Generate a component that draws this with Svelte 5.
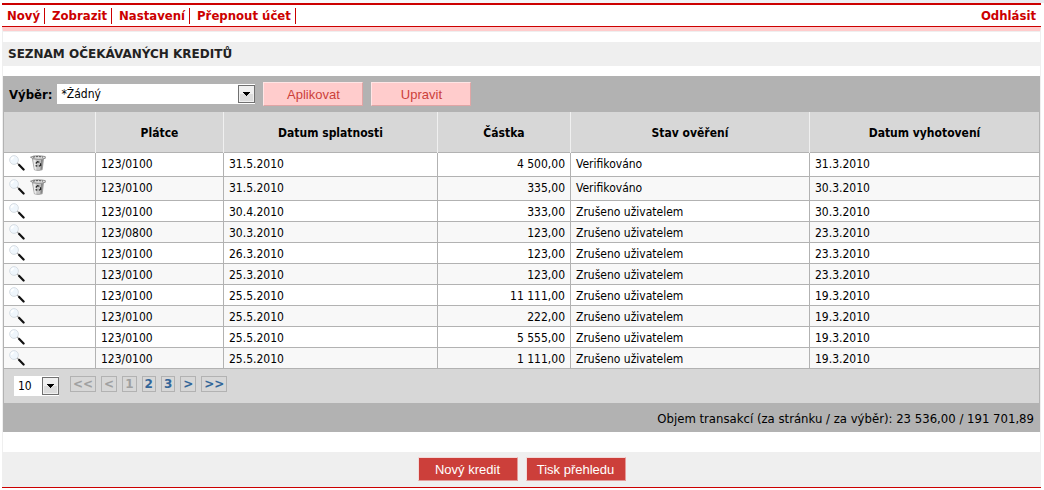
<script lang="ts">
  type Credit = {
    payer: string;
    due: string;
    amount: string;
    state: string;
    created: string;
    removable?: boolean;
  };

  const menu = ['Nový', 'Zobrazit', 'Nastavení', 'Přepnout účet'];

  const cancelled = 'Zrušeno uživatelem';

  const credits: Credit[] = [
    { payer: '123/0100', due: '31.5.2010', amount: '4 500,00', state: 'Verifikováno', created: '31.3.2010', removable: true },
    { payer: '123/0100', due: '31.5.2010', amount: '335,00', state: 'Verifikováno', created: '30.3.2010', removable: true },
    { payer: '123/0100', due: '30.4.2010', amount: '333,00', state: cancelled, created: '30.3.2010' },
    { payer: '123/0800', due: '30.3.2010', amount: '123,00', state: cancelled, created: '23.3.2010' },
    { payer: '123/0100', due: '26.3.2010', amount: '123,00', state: cancelled, created: '23.3.2010' },
    { payer: '123/0100', due: '25.3.2010', amount: '123,00', state: cancelled, created: '23.3.2010' },
    { payer: '123/0100', due: '25.5.2010', amount: '11 111,00', state: cancelled, created: '19.3.2010' },
    { payer: '123/0100', due: '25.5.2010', amount: '222,00', state: cancelled, created: '19.3.2010' },
    { payer: '123/0100', due: '25.5.2010', amount: '5 555,00', state: cancelled, created: '19.3.2010' },
    { payer: '123/0100', due: '25.5.2010', amount: '1 111,00', state: cancelled, created: '19.3.2010' }
  ];

  let filter = $state('none');
  let pageSize = $state('10');
  let page = $state(1);
  const lastPage = 3;
</script>

{#snippet arrow()}
  <svg class="arrow" width="17" height="18" viewBox="0 0 17 18" aria-hidden="true">
    <rect x="0.5" y="0.5" width="16" height="17" fill="#f0f0f0" stroke="#707070" />
    <rect x="2" y="9" width="13" height="7" fill="#dcdcdc" />
    <path d="M5 7h7v1h-1v1h-1v1H9v1H8v-1H7V9H6V8H5z" fill="#000" />
  </svg>
{/snippet}

<div class="page">
  <nav class="menu">
    <ul>
      {#each menu as item}
        <li><a href="#menu">{item}</a></li>
      {/each}
    </ul>
    <a href="#logout">Odhlásit</a>
  </nav>

  <main>
    <h1>Seznam očekávaných kreditů</h1>

    <section>
      <form class="filter" onsubmit={(e) => e.preventDefault()}>
        <label for="filter">Výběr:</label>
        <span class="select wide">
          <select id="filter" bind:value={filter}>
            <option value="none">*Žádný</option>
          </select>
          {@render arrow()}
        </span>
        <button class="button light">Aplikovat</button>
        <button class="button light" type="button">Upravit</button>
      </form>

      <table>
        <colgroup>
          <col class="c-actions" />
          <col class="c-payer" />
          <col class="c-due" />
          <col class="c-amount" />
          <col class="c-state" />
          <col class="c-created" />
        </colgroup>
        <thead>
          <tr>
            <th aria-label="Akce"></th>
            <th>Plátce</th>
            <th>Datum splatnosti</th>
            <th>Částka</th>
            <th>Stav ověření</th>
            <th>Datum vyhotovení</th>
          </tr>
        </thead>
        <tbody>
          {#each credits as credit}
            <tr>
              <td>
                <div class="actions">
                  <button class="icon" aria-label="Detail">
                    <svg width="16" height="16" viewBox="0 0 16 16">
                      <circle cx="5" cy="5" r="4.4" fill="#eff6fc" stroke="#d8dee4" />
                      <path d="M2.5 5A3 3 0 0 1 5 2.3" fill="none" stroke="#fff" stroke-width="1.4" />
                      <path d="M8.3 8.1l2 1.9" stroke="#a8a8a8" stroke-width="1.4" />
                      <path d="M10.2 10l4.4 4.5" stroke="#111" stroke-width="2.2" stroke-linecap="round" />
                    </svg>
                  </button>
                  {#if credit.removable}
                    <button class="icon tall" aria-label="Zrušit">
                      <svg width="16" height="16" viewBox="0 0 16 16">
                        <path d="M2.4 3.5h11.2l-1.4 11.3q-3.9 1.4-7.8 0z" fill="#c4c4c4" stroke="#8d8d8d" stroke-width="0.7" />
                        <path d="M3.2 4.6h2.4l.8 10.4-1.8-.4z" fill="#ececec" />
                        <path d="M11 4.8l2-.4-1.2 10-1.4.4z" fill="#858585" />
                        <path d="M.5 2.2Q3 .6 8 .8t7.3.8v1.7Q12 4.5 8 4.3 2.5 4.2.5 2.2z" fill="#dedede" stroke="#6e6e6e" stroke-width="0.7" />
                        <path d="M3 2.2q5-1.2 10 0" fill="none" stroke="#444" stroke-width="0.9" stroke-dasharray="2 1" />
                        <path d="M5.8 8.5l1.7-1.9 1.9.7M10.5 8.3l.2 2.1-1.9.8M7.3 11.2l-1.7-.5" fill="none" stroke="#222" stroke-width="1.2" />
                      </svg>
                    </button>
                  {/if}
                </div>
              </td>
              <td>{credit.payer}</td>
              <td>{credit.due}</td>
              <td class="amount">{credit.amount}</td>
              <td>{credit.state}</td>
              <td>{credit.created}</td>
            </tr>
          {/each}
        </tbody>
      </table>

      <div class="paging">
        <span class="select">
          <select aria-label="Počet záznamů na stránku" bind:value={pageSize}>
            <option>10</option>
            <option>20</option>
            <option>50</option>
          </select>
          {@render arrow()}
        </span>
        <div class="pages">
          <button disabled={page === 1} onclick={() => (page = 1)}>&lt;&lt;</button>
          <button disabled={page === 1} onclick={() => (page -= 1)}>&lt;</button>
          {#each [1, 2, 3] as n}
            <button disabled={page === n} onclick={() => (page = n)}>{n}</button>
          {/each}
          <button disabled={page === lastPage} onclick={() => (page += 1)}>&gt;</button>
          <button disabled={page === lastPage} onclick={() => (page = lastPage)}>&gt;&gt;</button>
        </div>
      </div>

      <p class="total">Objem transakcí (za stránku / za výběr): 23 536,00 / 191 701,89</p>
    </section>
  </main>

  <footer>
    <button class="button">Nový kredit</button>
    <button class="button">Tisk přehledu</button>
  </footer>
</div>

<style>
  :global(body) {
    background: linear-gradient(to right, #fff, #e9eaef) top / 100% 3px no-repeat #fff;
  }

  .page {
    margin: 3px 3px 0 2px;
    border-top: 2px solid #c00;
    border-bottom: 1px solid #c00;
    font-family: "DejaVu Sans Condensed", "DejaVu Sans", sans-serif;
    font-size: 12px;
    color: #000;
  }

  .menu {
    display: flex;
    justify-content: space-between;
    align-items: center;
    height: 21px;
    padding: 0 5px;
    border-bottom: 1px solid #c00;
    font-size: 13px;
    font-weight: bold;
  }

  .menu ul {
    display: flex;
    gap: 7px;
    margin: 0;
    padding: 0;
    list-style: none;
  }

  .menu li {
    padding-right: 4px;
    border-right: 1px solid #c00;
    line-height: 16px;
  }

  .menu a {
    color: #c00;
    text-decoration: none;
  }

  main {
    border: 1px solid #efefef;
    border-top: 4px solid #fcc;
    border-bottom: none;
    padding: 11px 0 20px;
    box-shadow: inset 0 1px #efefef;
  }

  h1 {
    margin: 0 0 10px;
    padding: 0 5px;
    background: #efefef;
    color: #222;
    font-family: "DejaVu Sans", sans-serif;
    font-size: 12px;
    line-height: 24px;
    text-transform: uppercase;
  }

  .filter {
    display: flex;
    align-items: center;
    gap: 8px;
    height: 36px;
    padding: 0 6px;
    background: #b2b2b2;
  }

  .filter label {
    margin-right: -3px;
    font-size: 13px;
    font-weight: bold;
  }

  .select {
    position: relative;
    width: 45px;
    height: 20px;
  }

  .select.wide {
    width: 198px;
  }

  .select select {
    appearance: none;
    width: 100%;
    height: 100%;
    padding: 0 20px 0 4px;
    border: none;
    border-radius: 0;
    background: #fff;
    color: #000;
    font: inherit;
  }

  .arrow {
    position: absolute;
    top: 1px;
    right: 0;
    pointer-events: none;
  }

  .button {
    width: 100px;
    height: 24px;
    padding: 0;
    border: 1px solid;
    border-color: #f3d9d9 #e59a98 #e59a98 #f3d9d9;
    background: #cc3f3a;
    color: #fff;
    font-family: "Liberation Sans", Arial, sans-serif;
    font-size: 13px;
    cursor: pointer;
  }

  .button.light {
    border-color: #ffe5e5 #e0a5a5 #e0a5a5 #ffe5e5;
    background: #fcc;
    color: #cc3f3a;
  }

  table {
    width: 100%;
    table-layout: fixed;
    border-collapse: collapse;
  }

  .c-actions { width: 92px; }
  .c-payer { width: 128px; }
  .c-due { width: 214px; }
  .c-amount { width: 133px; }
  .c-state { width: 239px; }
  .c-created { width: 230px; }

  th {
    height: 38px;
    padding: 2px 0 0;
    border-right: 1px solid #f0f0f0;
    background: #d7d7d7;
  }

  th:first-child {
    border-left: 1px solid #b2b2b2;
  }

  th:last-child {
    border-right-color: #b2b2b2;
  }

  td {
    padding: 2px 5px 0;
    border: 1px solid #b2b2b2;
    line-height: 18px;
    vertical-align: top;
  }

  tbody tr:nth-child(even) {
    background: #f8f8f8;
  }

  .amount {
    text-align: right;
  }

  .actions {
    display: flex;
    align-items: flex-start;
    gap: 5px;
  }

  .icon {
    display: flex;
    align-items: flex-start;
    padding: 0;
    border: none;
    background: none;
    cursor: pointer;
  }

  .icon.tall {
    height: 21px;
  }

  .paging {
    display: flex;
    align-items: center;
    gap: 11px;
    height: 34px;
    padding: 0 10px;
    border: 1px solid #b2b2b2;
    border-width: 0 1px;
    background: #d7d7d7;
  }

  .pages {
    display: flex;
    gap: 5px;
    padding-bottom: 4px;
  }

  .pages button {
    height: 16px;
    padding: 0 2px;
    border: 1px solid #b2b2b2;
    background: none;
    color: #369;
    font-family: "DejaVu Sans", sans-serif;
    font-size: 12px;
    font-weight: bold;
    line-height: 14px;
    cursor: pointer;
  }

  .pages button:disabled {
    color: #a0a0a0;
    cursor: default;
  }

  .total {
    margin: 0;
    padding: 2px 6px 0;
    background: #b2b2b2;
    font-size: 13px;
    line-height: 27px;
    text-align: right;
  }

  footer {
    display: flex;
    justify-content: center;
    gap: 8px;
    padding: 5px 0 6px;
    background: #efefef;
  }
</style>
